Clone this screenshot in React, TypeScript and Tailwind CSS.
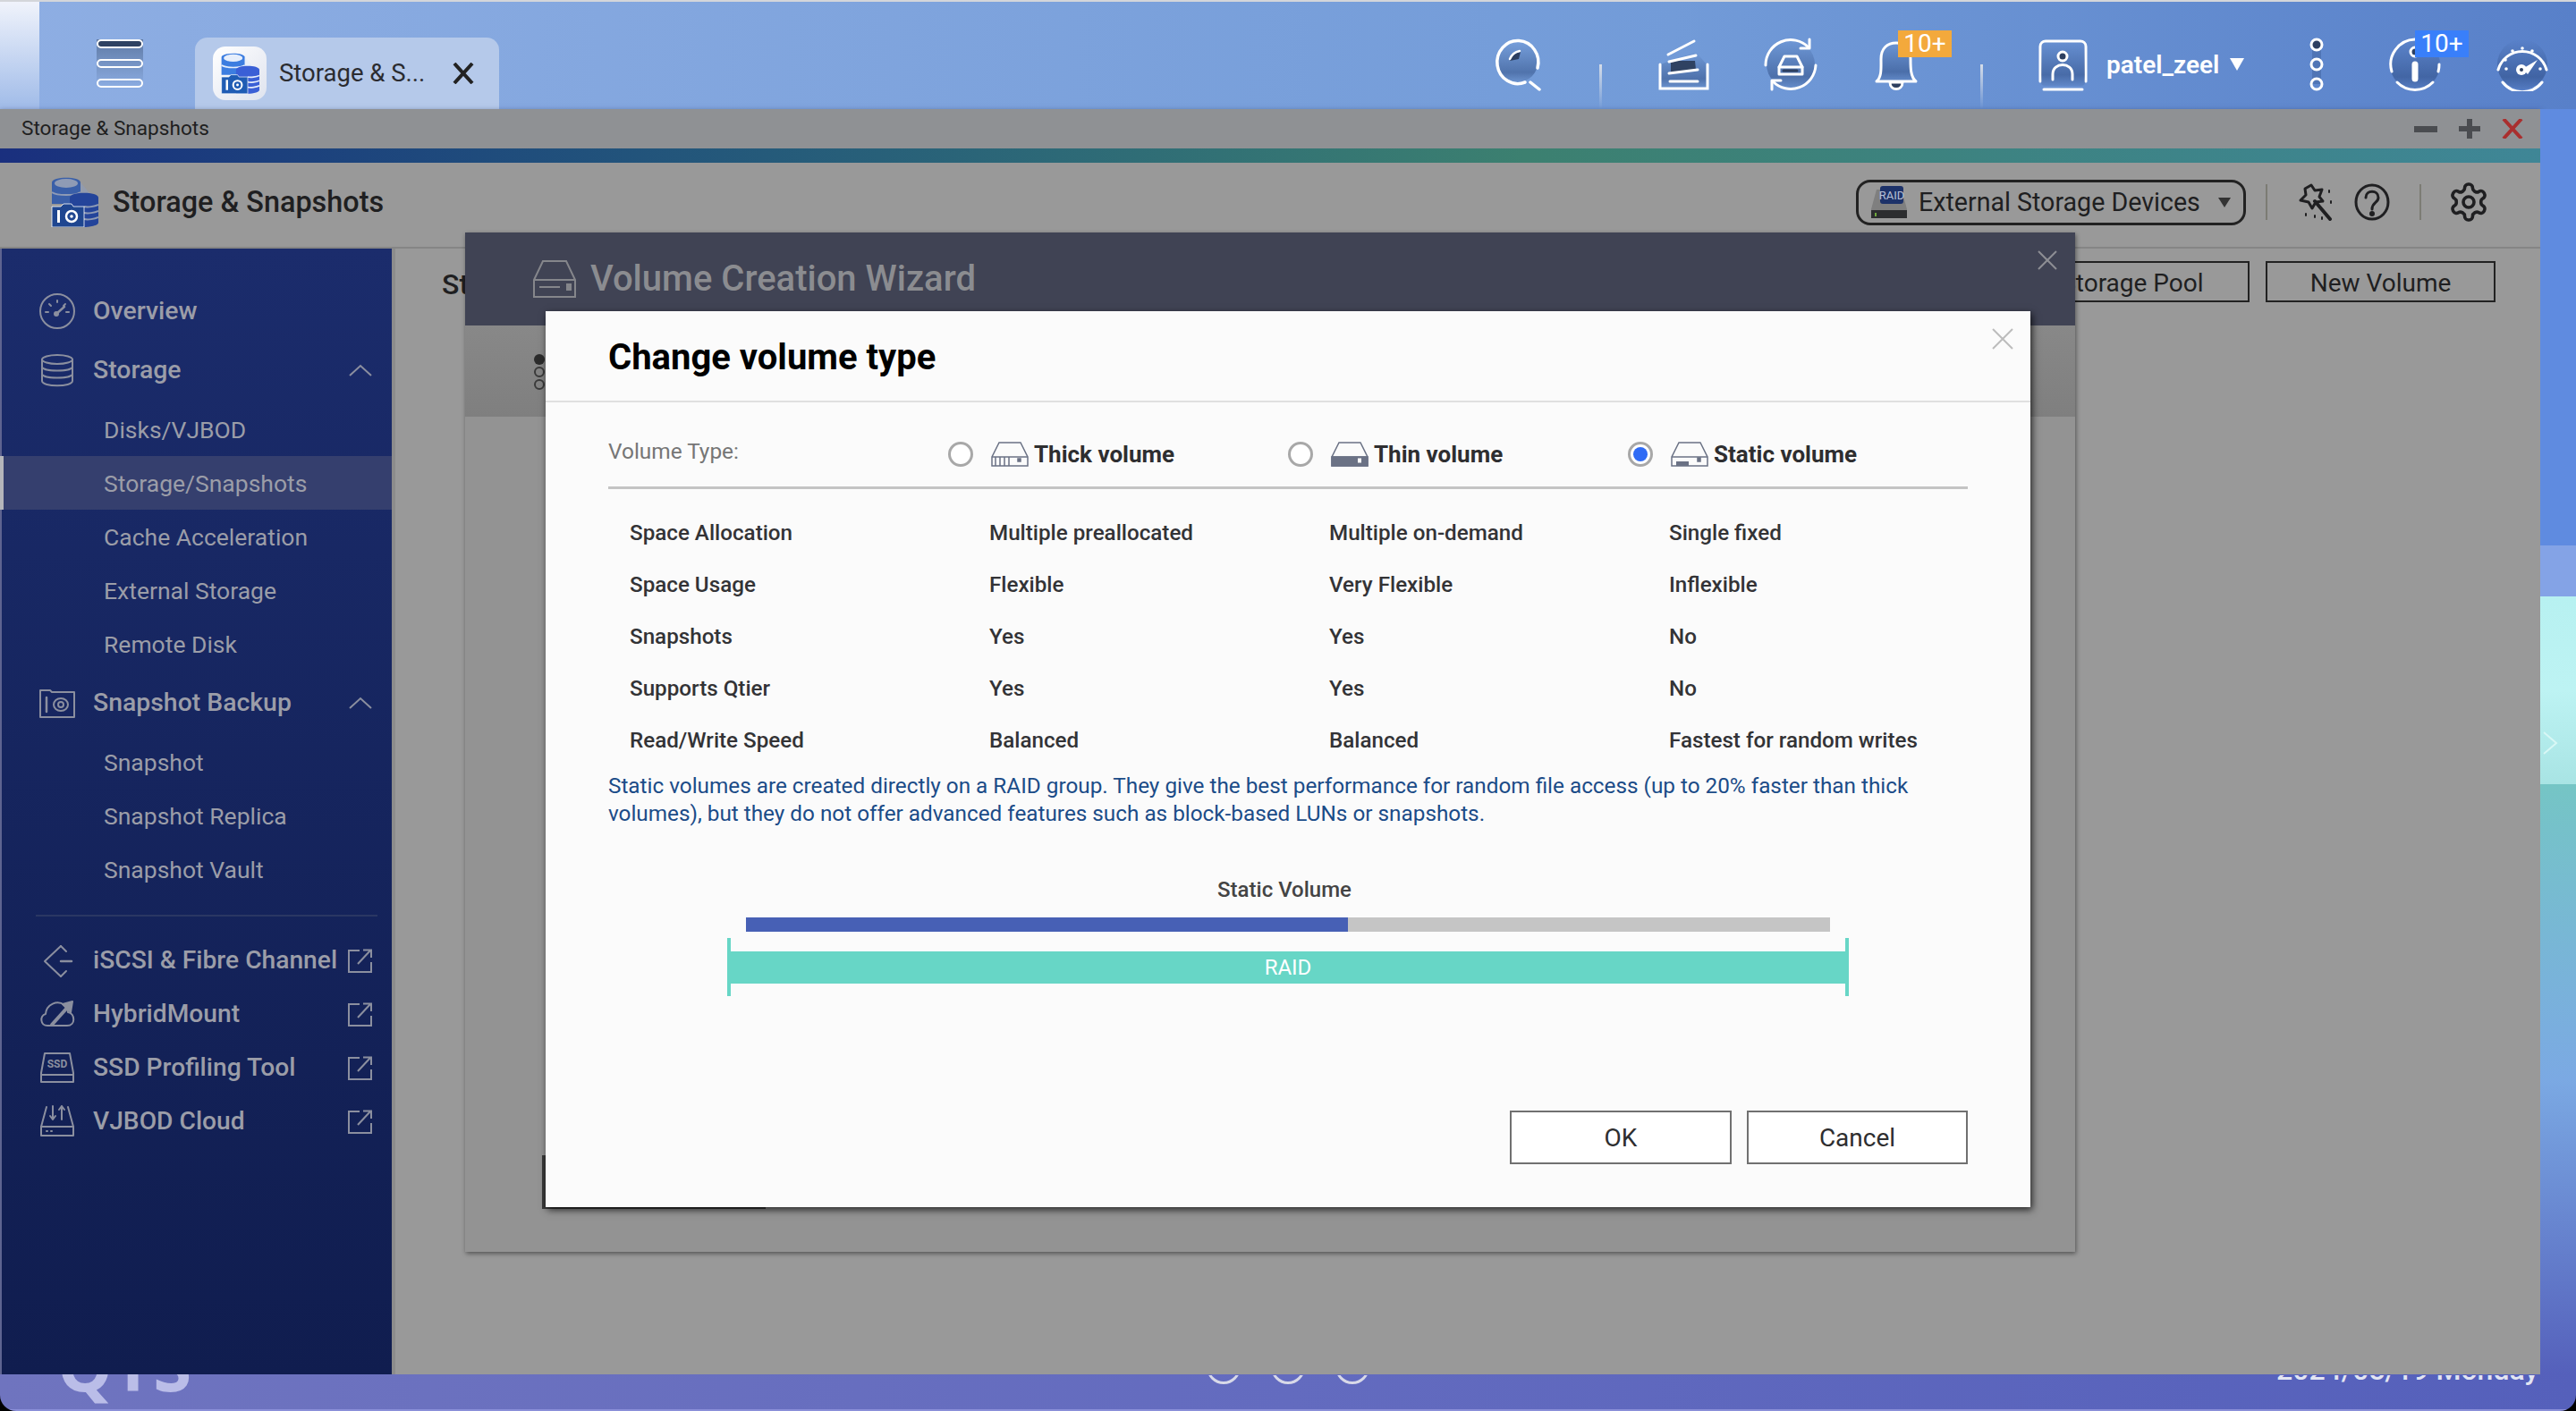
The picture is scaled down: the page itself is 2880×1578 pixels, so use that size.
import React from "react";

const Fade = () => (
  <defs>
    <linearGradient id="tbFade" x1="0" y1="0" x2="0" y2="1">
      <stop offset="0" stopColor="#1e3a6e" stopOpacity="0" />
      <stop offset="0.75" stopColor="#1e3a6e" stopOpacity="0.42" />
      <stop offset="1" stopColor="#1e3a6e" stopOpacity="0.1" />
    </linearGradient>
  </defs>
);

const SearchIcon = () => (
  <svg width="60" height="60" viewBox="0 0 60 60" fill="none" stroke="#fff" strokeWidth="3.5" strokeLinecap="round">
    <Fade />
    <circle cx="29" cy="28" r="22" fill="url(#tbFade)" stroke="none" />
    <path d="M51 34A23 24 0 1 0 37 50" />
    <path d="M43 50L53 58" />
    <path d="M20 26C22 20 26 17 32 16L30 24Z" fill="#2d3f60" stroke="none" />
    <path d="M20 24C22 19 26 16 31 15" strokeWidth="2.5" />
  </svg>
);

const StackIcon = () => (
  <svg width="60" height="60" viewBox="0 0 60 60" fill="none" stroke="#fff" strokeWidth="3" strokeLinecap="round">
    <Fade />
    <path d="M4 30L16 26L44 16L56 30V56H4Z" fill="url(#tbFade)" stroke="none" />
    <path d="M16 26L43 26L44 36L16 40Z" fill="#2f4262" stroke="none" />
    <path d="M13 19L42 4" />
    <path d="M14 27L44 20" />
    <path d="M14 40L46 36" />
    <path d="M15 49H46" />
    <path d="M4 30V57H57V30" />
  </svg>
);

const SyncIcon = () => (
  <svg width="60" height="60" viewBox="0 0 60 60" fill="none" stroke="#fff" strokeWidth="3" strokeLinecap="round" strokeLinejoin="round">
    <Fade />
    <circle cx="30" cy="30" r="27" fill="url(#tbFade)" stroke="none" />
    <path d="M2 31A28 28 0 0 1 50 11" />
    <path d="M51 2V12H41" />
    <path d="M58 31A28 28 0 0 1 10 49" />
    <path d="M9 58V48H19" />
    <path d="M23 21H37L43 33V41H17V33Z" />
    <path d="M17 33H43" />
    <path d="M22 37H37" stroke="#2d3f60" strokeWidth="3" />
  </svg>
);

const BellIcon = () => (
  <svg width="60" height="60" viewBox="0 0 60 60" fill="none" stroke="#fff" strokeWidth="3" strokeLinejoin="round">
    <Fade />
    <path d="M6 49C12 44 11 34 11 24C11 12 18 6 28 6C38 6 44 14 44 24C44 34 44 44 50 49Z" fill="url(#tbFade)" />
    <path d="M21 50C21 60 35 60 35 50Z" fill="#2d3f60" />
  </svg>
);

const UserIcon = () => (
  <svg width="60" height="60" viewBox="0 0 60 60" fill="none" stroke="#fff" strokeWidth="3" strokeLinecap="round">
    <Fade />
    <path d="M5 49V10C5 6 8 4 11 4H50C53 4 56 6 56 10V49" />
    <rect x="6" y="5" width="49" height="49" rx="4" fill="url(#tbFade)" stroke="none" />
    <circle cx="30" cy="21" r="5" fill="#2d3f60" />
    <path d="M19 47V41C19 27 41 27 41 41V47" />
    <path d="M9 58H52" />
  </svg>
);

const DotsIcon = () => (
  <svg width="60" height="60" viewBox="0 0 60 60" fill="none" stroke="#fff" strokeWidth="3">
    <rect x="25" y="8" width="10" height="44" fill="#1e3a6e" fillOpacity="0.25" stroke="none" />
    <circle cx="30" cy="8" r="6" fill="#2d3f60" />
    <circle cx="30" cy="30" r="6" />
    <circle cx="30" cy="52" r="6" />
  </svg>
);

const InfoIcon = () => (
  <svg width="60" height="60" viewBox="0 0 60 60" fill="none" stroke="#fff" strokeWidth="3" strokeLinecap="round">
    <Fade />
    <circle cx="30" cy="30" r="28" fill="url(#tbFade)" stroke="none" />
    <path d="M4 38A28 28 0 0 1 30 2" />
    <path d="M56 38A28 28 0 0 0 57 30" />
    <path d="M10 50A28 28 0 0 0 50 50" />
    <circle cx="30" cy="16" r="5" fill="#2d3f60" />
    <path d="M30 30V46" strokeWidth="7" />
  </svg>
);

const GaugeIcon = () => (
  <svg width="60" height="60" viewBox="0 0 60 60" fill="none" stroke="#fff" strokeWidth="3" strokeLinecap="round">
    <Fade />
    <circle cx="30" cy="30" r="28" fill="url(#tbFade)" stroke="none" />
    <path d="M3 36A28 28 0 0 1 57 36" />
    <path d="M8 50A28 28 0 0 0 52 50" />
    <path d="M30 35L47 25L36 41Z" fill="#fff" stroke="none" />
    <circle cx="29" cy="36" r="6" fill="#fff" stroke="none" />
    <circle cx="29" cy="36" r="2" fill="#2d3f60" stroke="none" />
    <g fill="#fff" stroke="none">
      <circle cx="30" cy="12" r="1.8" />
      <circle cx="19" cy="15" r="1.8" />
      <circle cx="41" cy="15" r="1.8" />
      <circle cx="11" cy="25" r="1.8" />
      <circle cx="12" cy="35" r="1.8" />
      <circle cx="50" cy="35" r="1.8" />
    </g>
  </svg>
);

const StorageGlyph = ({ className, dark }: { className: string; dark?: boolean }) => {
  const top = dark ? "#3a5fa8" : "#3c7de0";
  const side = dark ? "#24449a" : "#3a5fd6";
  const front = dark ? "#1f4690" : "#1f5cb4";
  const hi = dark ? "#8f9bb5" : "#e6eefb";
  return (
    <svg className={className} viewBox="0 0 54 56">
      <path d="M2 6C2 -1 34 -1 34 6V30H2Z" fill={top} />
      <ellipse cx="18" cy="7" rx="13" ry="5" fill={hi} />
      <path d="M2 17C8 21 28 21 34 17" stroke={hi} strokeWidth="2" fill="none" />
      <path d="M34 6L46 20H34Z" fill={hi} opacity="0.7" />
      <path d="M22 23C22 16 54 16 54 23V51C54 55 40 56 38 56H22Z" fill={side} />
      <path d="M38 33C42 34 50 33 54 31M38 40C42 41 50 40 54 38M38 47C42 48 50 47 54 45" stroke={hi} strokeWidth="2" fill="none" />
      <path d="M2 33H12L15 30H24L26 33H38V56H2Z" fill={front} stroke="#fff" strokeWidth="0.8" />
      <rect x="8" y="37" width="3" height="14" fill="#fff" />
      <circle cx="24" cy="44" r="6" fill="none" stroke="#fff" strokeWidth="2.5" />
      <circle cx="24" cy="44" r="1.8" fill="#fff" />
    </svg>
  );
};

const SideIcon = ({ children, w = 40, h = 40, vb = "0 0 40 40", extra = "" }: { children: React.ReactNode; w?: number; h?: number; vb?: string; extra?: string }) => (
  <svg width={w} height={h} viewBox={vb} fill="none" stroke="#8b8f9f" strokeWidth="2" strokeLinecap="round" strokeLinejoin="round" className={extra}>
    {children}
  </svg>
);

const OverviewIcon = () => (
  <SideIcon>
    <ellipse cx="20" cy="20" rx="19" ry="19" />
    <path d="M19 23L28 15" strokeWidth="2.5" />
    <circle cx="19" cy="23" r="2" fill="#8b8f9f" />
    <path d="M7 21H10M11 12L13 14M20 8V10M29 12L27 14M30 21H33" />
  </SideIcon>
);
const DbIcon = () => (
  <SideIcon>
    <ellipse cx="20" cy="8" rx="17" ry="5" />
    <path d="M3 8V32C3 39 37 39 37 32V8" />
    <path d="M3 16C3 22 37 22 37 16M3 24C3 30 37 30 37 24" />
  </SideIcon>
);
const CamIcon = () => (
  <SideIcon>
    <path d="M1 36V6H12L14 8H39V36Z" />
    <path d="M8 14V30" strokeWidth="2.5" />
    <ellipse cx="24" cy="22" rx="8" ry="7" />
    <circle cx="24" cy="22" r="3" />
  </SideIcon>
);
const IscsiIcon = () => (
  <SideIcon>
    <path d="M24 4L6 21L24 38" />
    <path d="M24 4L30 10M24 38L30 32" />
    <path d="M24 21H36" strokeWidth="2.5" />
  </SideIcon>
);
const CloudIcon = () => (
  <SideIcon>
    <path d="M9 33C1 33 0 22 7 20C8 9 20 4 28 10C31 13 32 15 32 18C40 19 41 33 31 33Z" />
    <path d="M14 32L32 12" strokeWidth="4" />
    <path d="M26 9L37 6L35 18Z" fill="#8b8f9f" />
  </SideIcon>
);
const SsdIcon = () => (
  <svg width="40" height="40" viewBox="0 0 40 40" fill="none" stroke="#8b8f9f" strokeWidth="2" strokeLinejoin="round">
    <path d="M6 4H34L38 26V36H2V26Z" />
    <path d="M2 28H38" />
    <text x="20" y="20" textAnchor="middle" fontFamily="Roboto" fontWeight="700" fontSize="12" fill="#8b8f9f" stroke="none">SSD</text>
  </svg>
);
const VjbodIcon = () => (
  <SideIcon>
    <path d="M8 4L2 26V36H38V26L32 4" />
    <path d="M2 26H38" />
    <path d="M15 3V18M12 14L15 18L18 14M25 18V3M22 7L25 3L28 7" />
    <path d="M8 31H9M13 31H14" />
  </SideIcon>
);
const ExtIcon = () => (
  <svg width="27" height="27" viewBox="0 0 27 27" fill="none" stroke="#8b8f9f" strokeWidth="2" className="shrink-0">
    <path d="M13 2H1V26H26V15" />
    <path d="M11 17L25 2M17 1.5H26V10" />
  </svg>
);

const Chevron = () => (
  <svg width="26" height="14" viewBox="0 0 26 14" fill="none" stroke="#8b8f9f" strokeWidth="2" className="ml-auto mr-[22px]">
    <path d="M1 13L13 2L25 13" />
  </svg>
);

const Group = ({ icon, label }: { icon: React.ReactNode; label: string }) => (
  <div className="flex h-[66px] items-center pl-[42px]">
    <div className="w-[40px] h-[40px] shrink-0 flex items-center justify-center">{icon}</div>
    <span className="ml-[20px] text-[28.4px] font-medium text-[#9b9da8]">{label}</span>
    {label !== "Overview" && <Chevron />}
  </div>
);

const Sub = ({ label, active }: { label: string; active?: boolean }) => (
  <div
    className={
      active
        ? "flex h-[60px] items-center -ml-[2px] border-l-[4px] border-[#b5b6ba] pl-[112px] pt-[1px] bg-[#353f6e] text-[26.5px] text-[#9b9da8]"
        : "flex h-[60px] items-center pl-[114px] pt-[1px] text-[26.5px] text-[#9b9da8]"
    }
  >
    {label}
  </div>
);

const Ext = ({ icon, label }: { icon: React.ReactNode; label: string }) => (
  <div className="flex h-[60px] items-center pl-[42px] pr-[22px]">
    <div className="w-[40px] h-[40px] shrink-0">{icon}</div>
    <span className="ml-[20px] text-[28.2px] font-medium text-[#9b9da8] whitespace-nowrap">{label}</span>
    <div className="ml-auto">
      <ExtIcon />
    </div>
  </div>
);

const Drive = ({ kind }: { kind: "thick" | "thin" | "static" }) => (
  <svg width="42" height="28" viewBox="0 0 42 28" fill="none" stroke="#6b7285" strokeWidth="1.5" className="shrink-0">
    <path d="M9 1H33L41 17V27H1V17Z" fill="none" />
    <path d="M1 17H41" />
    {kind === "thick" && <path d="M5 17V27M10 17V27M15 17V27M20 17V27" />}
    {kind === "thin" && <path d="M1 17H41V27H1Z" fill="#6b7285" />}
    {kind === "thick" && <rect x="30" y="19" width="3" height="3" fill="#6b7285" />}
    {kind === "thin" && <rect x="30" y="18.5" width="4" height="5" fill="#fff" stroke="none" />}
    {kind === "static" && <rect x="30" y="18" width="3" height="4" fill="#6b7285" />}
    {kind === "static" && <rect x="6" y="22" width="14" height="5" fill="#6b7285" stroke="none" />}
  </svg>
);

const TypeOption = ({ kind, label, on }: { kind: "thick" | "thin" | "static"; label: string; on?: boolean }) => (
  <div className="mb-[2px] flex items-center">
    <div className="w-[28px] h-[28px] rounded-full border-[3px] border-[#a8a8a8] bg-white flex items-center justify-center shrink-0">
      {on && <div className="w-[16px] h-[16px] rounded-full bg-[#2f6bf5]" />}
    </div>
    <div className="ml-[20px]">
      <Drive kind={kind} />
    </div>
    <span className="ml-[6px] text-[26px] font-bold text-[#2e2e30] whitespace-nowrap">{label}</span>
  </div>
);

const rows = [
  ["Space Allocation", "Multiple preallocated", "Multiple on-demand", "Single fixed"],
  ["Space Usage", "Flexible", "Very Flexible", "Inflexible"],
  ["Snapshots", "Yes", "Yes", "No"],
  ["Supports Qtier", "Yes", "Yes", "No"],
  ["Read/Write Speed", "Balanced", "Balanced", "Fastest for random writes"],
];

export default function App() {
  return (
    <div className="relative w-[2880px] h-[1578px] overflow-hidden bg-black font-['Roboto',sans-serif]">
      <div className="flex h-full flex-col overflow-hidden rounded-b-[18px]">
        <div className="h-[2px] bg-[#d4d6da]" />
        {/* Desktop top bar */}
        <div className="flex h-[120px] bg-gradient-to-r from-[#8eaee3] via-[#729bd8] via-65% to-[#5880c9]">
          <div className="w-[44px] h-full bg-gradient-to-b from-[#f0f3fb] to-[#a0bbe8]" />
          <div className="ml-[64px] mt-[42px] flex h-[54px] w-[52px] flex-col justify-between bg-gradient-to-b from-[#5f7aa5] to-transparent">
            <div className="h-[10px] rounded-full border-[2.5px] border-white bg-[#2f4262]" />
            <div className="h-[10px] rounded-full border-[2.5px] border-white" />
            <div className="h-[10px] rounded-full border-[2.5px] border-white" />
          </div>
          <div className="ml-[58px] mt-[40px] flex h-[80px] w-[340px] items-center rounded-t-[14px] bg-[#b5c9ea]">
            <div className="ml-[20px] flex h-[60px] w-[60px] items-center justify-center rounded-[14px] bg-gradient-to-br from-white to-[#dfe3ee]">
              <StorageGlyph className="w-[44px] h-[50px]" />
            </div>
            <span className="ml-[14px] w-[170px] whitespace-nowrap text-[27.5px] text-[#2b2c30]">Storage &amp; S...</span>
            <svg width="24" height="24" viewBox="0 0 24 24" className="ml-[24px]" stroke="#222" strokeWidth="4" fill="none">
              <path d="M2 1L22 23M22 1L2 23" />
            </svg>
          </div>
          <div className="ml-[1110px] mt-[20px] flex h-[100px] items-center">
            <SearchIcon />
            <div className="ml-[60px] h-[50px] w-[3px] self-end bg-gradient-to-b from-[#d6dde8] to-transparent" />
            <div className="ml-[61px]">
              <StackIcon />
            </div>
            <div className="ml-[60px]">
              <SyncIcon />
            </div>
            <div className="relative ml-[60px]">
              <BellIcon />
              <span className="absolute left-[30px] top-[-8px] flex h-[30px] w-[60px] items-center justify-center bg-[#f3a93c] text-[28px] text-white">10+</span>
            </div>
            <div className="ml-[62px] h-[50px] w-[3px] self-end bg-gradient-to-b from-[#d6dde8] to-transparent" />
            <div className="ml-[59px]">
              <UserIcon />
            </div>
            <span className="ml-[19px] mt-[2px] w-[128px] whitespace-nowrap text-[28px] font-semibold text-white">patel_zeel</span>
            <svg width="16" height="14" viewBox="0 0 16 14" className="ml-[10px]">
              <path d="M0 0H16L8 14Z" fill="#fff" />
            </svg>
            <div className="ml-[51px]">
              <DotsIcon />
            </div>
            <div className="relative ml-[50px]">
              <InfoIcon />
              <span className="absolute left-[30px] top-[-8px] flex h-[30px] w-[60px] items-center justify-center bg-[#397ffa] text-[28px] text-white">10+</span>
            </div>
            <div className="ml-[60px]">
              <GaugeIcon />
            </div>
          </div>
        </div>

        <div className="flex h-[1415px]">
          {/* Application window */}
          <div className="flex w-[2840px] flex-col bg-[#999999] shadow-[0_2px_6px_rgba(30,40,90,0.6)]">
            <div className="flex h-[44px] items-center bg-[#8f9194] pl-[24px] pr-[19px]">
              <span className="text-[22.6px] text-[#1f1f21]">Storage &amp; Snapshots</span>
              <div className="ml-auto flex items-center">
                <div className="h-[7px] w-[26px] bg-[#4a4c50]" />
                <svg width="24" height="22" viewBox="0 0 24 22" className="ml-[24px]" stroke="#4a4c50" strokeWidth="6" fill="none">
                  <path d="M12 0V22M0 11H24" />
                </svg>
                <svg width="24" height="22" viewBox="0 0 24 22" className="ml-[24px]" stroke="#a92f2f" strokeWidth="4" fill="none">
                  <path d="M2 0L22 22M22 0L2 22" />
                </svg>
              </div>
            </div>
            <div className="h-[16px] bg-gradient-to-r from-[#1a2f7e] via-[#3c8070] via-60% to-[#3f8696]" />
            <div className="flex h-[96px] items-center border-b-2 border-[#858585] pl-[56px] pr-[56px]">
              <div className="mb-[6px]">
                <StorageGlyph dark className="w-[54px] h-[56px]" />
              </div>
              <span className="mb-[6px] ml-[16px] text-[32.4px] font-medium text-[#1f1f21]">Storage &amp; Snapshots</span>
              <div className="mb-[6px] ml-auto flex items-center">
                <div className="flex h-[51px] w-[436px] items-center rounded-[16px] border-[3px] border-[#222] pl-[14px]">
                  <svg width="40" height="36" viewBox="0 0 40 36" className="shrink-0">
                    <path d="M6 4H34L40 26V36H0V26Z" fill="#7f7f7f" />
                    <rect x="0" y="27" width="40" height="9" fill="#2c2d2f" />
                    <rect x="10" y="0" width="26" height="20" rx="3" fill="#1d3269" />
                    <text x="23" y="15" textAnchor="middle" fontFamily="Roboto" fontSize="13" fill="#b8c0d6">RAID</text>
                    <rect x="4" y="30" width="2" height="4" fill="#6fa83c" />
                  </svg>
                  <span className="ml-[13px] whitespace-nowrap text-[28.6px] text-[#1f1f21]">External Storage Devices</span>
                  <svg width="14" height="11" viewBox="0 0 14 11" className="ml-[20px]">
                    <path d="M0 0H14L7 11Z" fill="#333" />
                  </svg>
                </div>
                <div className="ml-[22px] h-[40px] w-[2px] bg-[#7c7c74]" />
                <svg width="42" height="42" viewBox="0 0 42 42" className="ml-[33px]" fill="none" stroke="#1f1f21" strokeWidth="3" strokeLinejoin="round" strokeLinecap="round">
                  <path d="M16 2L20 8L28 7L25 15L29 20L21 21L17 28L13 21L4 19L10 13L9 6Z" />
                  <path d="M20 20L37 40" strokeWidth="4" />
                  <path d="M36 8V10M38 20V22M10 34V36M20 36V38M28 38V40" strokeWidth="2" />
                </svg>
                <svg width="40" height="42" viewBox="0 0 40 42" className="ml-[22px]" fill="none" stroke="#1f1f21" strokeWidth="3">
                  <ellipse cx="20" cy="21" rx="18" ry="19" />
                  <path d="M13 16C13 7 27 7 27 16C27 22 20 21 20 29" strokeLinecap="round" />
                  <circle cx="20" cy="34" r="1.5" fill="#1f1f21" />
                </svg>
                <div className="ml-[33px] h-[40px] w-[2px] bg-[#7c7c74]" />
                <svg width="48" height="48" viewBox="0 0 24 24" className="ml-[29px]" fill="none" stroke="#1f1f21" strokeWidth="1.8" strokeLinecap="round" strokeLinejoin="round">
                  <path d="M12.22 2h-.44a2 2 0 0 0-2 2v.18a2 2 0 0 1-1 1.73l-.43.25a2 2 0 0 1-2 0l-.15-.08a2 2 0 0 0-2.73.73l-.22.38a2 2 0 0 0 .73 2.73l.15.1a2 2 0 0 1 1 1.72v.51a2 2 0 0 1-1 1.74l-.15.09a2 2 0 0 0-.73 2.73l.22.38a2 2 0 0 0 2.73.73l.15-.08a2 2 0 0 1 2 0l.43.25a2 2 0 0 1 1 1.73V20a2 2 0 0 0 2 2h.44a2 2 0 0 0 2-2v-.18a2 2 0 0 1 1-1.73l.43-.25a2 2 0 0 1 2 0l.15.08a2 2 0 0 0 2.73-.73l.22-.39a2 2 0 0 0-.73-2.73l-.15-.08a2 2 0 0 1-1-1.74v-.5a2 2 0 0 1 1-1.74l.15-.09a2 2 0 0 0 .73-2.73l-.22-.38a2 2 0 0 0-2.73-.73l-.15.08a2 2 0 0 1-2 0l-.43-.25a2 2 0 0 1-1-1.73V4a2 2 0 0 0-2-2z" />
                  <circle cx="12" cy="12" r="3" />
                </svg>
              </div>
            </div>
            <div className="flex min-h-0 flex-1">
              {/* Sidebar */}
              <div className="flex w-[438px] shrink-0 flex-col border-l-2 border-[#5e6490] bg-gradient-to-b from-[#1b2c6c] to-[#101d4f] pt-[37px]">
                <Group icon={<OverviewIcon />} label="Overview" />
                <Group icon={<DbIcon />} label="Storage" />
                <div className="mt-[3px]">
                  <Sub label="Disks/VJBOD" />
                  <Sub label="Storage/Snapshots" active />
                  <Sub label="Cache Acceleration" />
                  <Sub label="External Storage" />
                  <Sub label="Remote Disk" />
                </div>
                <div className="mt-[3px]">
                  <Group icon={<CamIcon />} label="Snapshot Backup" />
                </div>
                <div className="mt-[3px]">
                  <Sub label="Snapshot" />
                  <Sub label="Snapshot Replica" />
                  <Sub label="Snapshot Vault" />
                </div>
                <div className="ml-[38px] mr-[16px] mt-[21px] h-[2px] bg-[#2a3763]" />
                <div className="mt-[19px]">
                  <Ext icon={<IscsiIcon />} label="iSCSI & Fibre Channel" />
                  <Ext icon={<CloudIcon />} label="HybridMount" />
                  <Ext icon={<SsdIcon />} label="SSD Profiling Tool" />
                  <Ext icon={<VjbodIcon />} label="VJBOD Cloud" />
                </div>
              </div>
              {/* Main content behind the wizard */}
              <div className="flex min-w-0 flex-1 items-start border-l-4 border-[#8c8c8c] pl-[52px] pr-[50px] pt-[14px]">
                <span className="mt-[2px] text-[32px] font-medium text-[#1f1f21]">Storage/Snapshots</span>
                <div className="ml-auto flex">
                  <div className="flex h-[46px] w-[325px] items-center justify-center border-2 border-[#222] pt-[3px] text-[28px] text-[#1f1f21]">New Storage Pool</div>
                  <div className="ml-[18px] flex h-[46px] w-[257px] items-center justify-center border-2 border-[#222] pt-[3px] text-[28px] text-[#1f1f21]">New Volume</div>
                </div>
              </div>
            </div>
          </div>
          {/* Desktop wallpaper visible beside the window */}
          <div className="flex flex-1 flex-col">
            <div className="h-[488px] bg-[#5f8be0]" />
            <div className="h-[57px] bg-[#84a3e6]" />
            <div className="relative h-[210px] bg-gradient-to-b from-[#b7f1f1] via-[#bdf3f3] to-[#a8e4e4]">
              <svg width="18" height="28" viewBox="0 0 18 28" fill="none" stroke="#d8f7f5" strokeWidth="2" className="absolute left-[2px] top-[150px]">
                <path d="M2 2L16 14L2 26" />
              </svg>
            </div>
            <div className="flex-1 bg-gradient-to-b from-[#75c5c5] via-[#7ba9e3] via-50% to-[#5560bb]" />
          </div>
        </div>

        {/* Desktop bottom edge */}
        <div className="relative flex-1 overflow-hidden border-b-2 border-[#8a8fd8] bg-gradient-to-r from-[#6f74bf] via-[#636bbf] to-[#5560bb]">
          <span className="absolute left-[64px] bottom-[11px] text-[78px] font-bold leading-none text-[#babde8] font-['Open_Sans',sans-serif]">QTS</span>
        </div>
      </div>

      {/* Items on the wallpaper that the window hides, except their lower edge */}
      <div className="absolute left-0 top-[1538px] h-[20px] w-[2880px] overflow-hidden">
        <div className="absolute left-[1349px] top-[-28px] h-[38px] w-[38px] rounded-full border-[3px] border-[#d8d9e8]" />
        <div className="absolute left-[1421px] top-[-28px] h-[38px] w-[38px] rounded-full border-[3px] border-[#d8d9e8]" />
        <div className="absolute left-[1493px] top-[-28px] h-[38px] w-[38px] rounded-full border-[3px] border-[#d8d9e8]" />
        <span className="absolute left-[2545px] top-[-24px] whitespace-nowrap text-[32px] font-medium leading-[36px] text-[#e3e5f2]">2024/08/19 Monday</span>
      </div>

      {/* Wizard window */}
      <div className="absolute left-[520px] top-[260px] flex h-[1140px] w-[1800px] flex-col bg-[#939393] shadow-[1px_2px_5px_rgba(0,0,0,0.45)]">
        <div className="relative flex h-[104px] items-center bg-[#404354] pl-[76px]">
          <svg width="48" height="42" viewBox="0 0 48 42" fill="none" stroke="#85868b" strokeWidth="2">
            <path d="M11 1H37L47 22V41H1V22Z" />
            <path d="M1 22H47M7 30H30" />
            <rect x="38" y="27" width="4" height="6" fill="#85868b" />
          </svg>
          <span className="ml-[16px] text-[40px] font-medium text-[#8b8c90]">Volume Creation Wizard</span>
          <svg width="22" height="22" viewBox="0 0 22 22" className="absolute right-[20px] top-[20px]" stroke="#8d8e94" strokeWidth="2" fill="none">
            <path d="M1 1L21 21M21 1L1 21" />
          </svg>
        </div>
        <div className="h-[102px] bg-gradient-to-b from-[#888888] to-[#7f7f7f] pl-[77px] pt-[32px]">
          <div className="flex w-[12px] flex-col gap-[2px]">
            <div className="h-[12px] rounded-full bg-[#2b2b2b]" />
            <div className="h-[12px] rounded-full border-2 border-[#3a3a3a]" />
            <div className="h-[12px] rounded-full border-2 border-[#3a3a3a]" />
          </div>
        </div>
      </div>

      {/* Dark sliver behind the dialog */}
      <div className="absolute left-[606px] top-[1292px] h-[60px] w-[250px] bg-[#3a3a3a]" />

      {/* Change volume type dialog */}
      <div className="absolute left-[610px] top-[348px] flex h-[1002px] w-[1660px] flex-col bg-[#fbfbfb] shadow-[2px_3px_8px_rgba(0,0,0,0.75)]">
        <div className="relative flex h-[102px] shrink-0 items-center border-b-2 border-[#e0e0e0] pl-[70px] pt-[3px]">
          <span className="text-[40px] font-bold leading-none text-black">Change volume type</span>
          <svg width="24" height="24" viewBox="0 0 24 24" className="absolute right-[19px] top-[19px]" stroke="#bcbcbc" strokeWidth="2" fill="none">
            <path d="M1 1L23 23M23 1L1 23" />
          </svg>
        </div>
        <div className="flex min-h-0 flex-1 flex-col pl-[70px] pr-[70px]">
          <div className="mt-[24px] grid h-[73px] shrink-0 grid-cols-[380px_380px_380px_1fr] items-center border-b-[3px] border-[#c4c4c4]">
            <span className="mb-[8px] text-[24.4px] text-[#767676]">Volume Type:</span>
            <TypeOption kind="thick" label="Thick volume" />
            <TypeOption kind="thin" label="Thin volume" />
            <TypeOption kind="static" label="Static volume" on />
          </div>
          <div className="mt-[20px] flex flex-col pl-[24px]">
            {rows.map((r) => (
              <div key={r[0]} className="grid h-[58px] grid-cols-[402px_380px_380px_1fr] items-center text-[24.2px] font-medium text-[#333336]">
                {r.map((c, i) => (
                  <span key={i}>{c}</span>
                ))}
              </div>
            ))}
          </div>
          <p className="mt-[6px] text-[24.3px] leading-[31px] text-[#1b4c88]">
            Static volumes are created directly on a RAID group. They give the best performance for random file access (up to 20% faster than thick volumes), but they do not offer advanced features such as block-based LUNs or snapshots.
          </p>
          <div className="ml-[133px] mt-[55px] w-[1254px]">
            <div className="h-[30px] pr-[8px] text-center text-[24px] font-medium leading-[30px] text-[#444]">Static Volume</div>
            <div className="ml-[21px] mt-[16px] flex h-[16px] w-[1212px] bg-[#c5c5c5]">
              <div className="h-full w-[673px] bg-[#4760b5]" />
            </div>
            <div className="mt-[7px] h-[65px] border-x-[4px] border-[#67d6c6] pt-[15px]">
              <div className="flex h-[36px] items-center justify-center bg-[#67d6c6] text-[24px] text-white">RAID</div>
            </div>
          </div>
          <div className="mt-auto mb-[48px] flex justify-end gap-[17px]">
            <button className="h-[60px] w-[248px] border-2 border-[#707070] bg-white pt-[2px] text-[28px] text-[#2e2e30]">OK</button>
            <button className="h-[60px] w-[247px] border-2 border-[#707070] bg-white pt-[2px] text-[28px] text-[#2e2e30]">Cancel</button>
          </div>
        </div>
      </div>
    </div>
  );
}
